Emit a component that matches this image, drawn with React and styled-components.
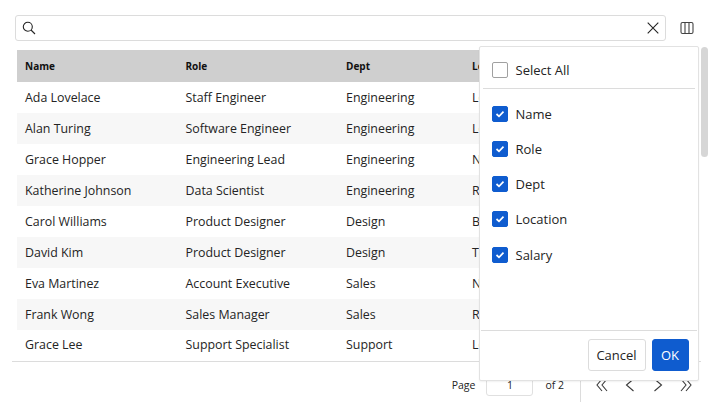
import styled, { createGlobalStyle } from 'styled-components';

const rows = [
  ['Ada Lovelace', 'Staff Engineer', 'Engineering', 'London'],
  ['Alan Turing', 'Software Engineer', 'Engineering', 'London'],
  ['Grace Hopper', 'Engineering Lead', 'Engineering', 'NYC'],
  ['Katherine Johnson', 'Data Scientist', 'Engineering', 'Remote'],
  ['Carol Williams', 'Product Designer', 'Design', 'Berlin'],
  ['David Kim', 'Product Designer', 'Design', 'Toronto'],
  ['Eva Martinez', 'Account Executive', 'Sales', 'NYC'],
  ['Frank Wong', 'Sales Manager', 'Sales', 'Remote'],
  ['Grace Lee', 'Support Specialist', 'Support', 'London'],
];

const columns = ['Name', 'Role', 'Dept', 'Location', 'Salary'];

const GlobalStyle = createGlobalStyle`
  html, body {
    margin: 0;
    padding: 0;
    background: #fff;
  }
  body {
    font-family: "Open Sans", "Noto Sans", sans-serif;
    color: #242424;
  }
`;

const Page = styled.div`
  position: relative;
  width: 720px;
  height: 415px;
  overflow: hidden;
  padding: 15px 12px 0 15px;
  box-sizing: border-box;
`;

const Toolbar = styled.div`
  display: flex;
  align-items: center;
  gap: 14px;
  height: 25.5px;
  width: 679px;
`;

const SearchBox = styled.div`
  flex: 1;
  height: 25.5px;
  box-sizing: border-box;
  display: flex;
  align-items: center;
  justify-content: space-between;
  padding: 0 5px 0 6px;
  border: 1px solid #dcdcdc;
  border-radius: 3px;
  color: #242424;
`;

const IconButton = styled.button`
  display: flex;
  align-items: center;
  justify-content: center;
  width: 14px;
  height: 14px;
  padding: 0;
  background: none;
  border: 0;
  color: ${(p) => p.$color || '#242424'};
`;

const TableWrap = styled.div`
  margin: 9.5px 0 0 -3px;
  width: 688.5px;
  border-bottom: 1px solid #dcdcdc;
  padding: 0 2px 1px 5px;
  box-sizing: border-box;
  overflow: hidden;
`;

const Row = styled.div`
  display: grid;
  grid-template-columns: 160.5px 160.5px 126px 120px 1fr;
  align-items: center;
  height: ${(p) => (p.$head ? '32.4px' : '30.9px')};
  background: ${(p) => (p.$head ? '#cfcfcf' : p.$alt ? '#f7f7f7' : '#fff')};
  font-size: ${(p) => (p.$head ? '10px' : '12.4px')};
  font-weight: ${(p) => (p.$head ? 700 : 400)};
  color: ${(p) => (p.$head ? '#111' : '#242424')};
`;

const Cell = styled.div`
  padding-left: 8px;
  white-space: nowrap;
`;

const Pager = styled.div`
  display: flex;
  justify-content: flex-end;
  align-items: flex-start;
  height: 40px;
  width: 679px;
  font-size: 10.5px;
  color: #242424;
`;

const PageInfo = styled.div`
  display: flex;
  align-items: center;
  height: 22px;
  margin-top: 12px;
`;

const PageInput = styled.div`
  width: 47px;
  height: 22px;
  box-sizing: border-box;
  margin: 0 12px 0 11px;
  border: 1px solid #e0e0e0;
  border-radius: 3px;
  display: flex;
  align-items: center;
  justify-content: center;
`;

const PagerNav = styled.div`
  display: flex;
  align-items: flex-start;
  gap: 12px;
  height: 40px;
  box-sizing: border-box;
  margin-left: 16px;
  padding: 15px 0 0 13px;
  border-left: 1px solid #dcdcdc;
  color: #3a3a3a;
`;

const Popup = styled.div`
  position: absolute;
  left: 478.5px;
  top: 46px;
  width: 220px;
  height: 334.5px;
  box-sizing: border-box;
  background: #fff;
  border: 1px solid #e2e2e2;
  border-radius: 2px;
  box-shadow: 0 1px 2px rgba(0, 0, 0, 0.06);
  display: flex;
  flex-direction: column;
  font-size: 13px;
  color: #242424;
`;

const SelectAll = styled.label`
  display: flex;
  align-items: center;
  gap: 8px;
  height: 41.5px;
  box-sizing: border-box;
  margin: 0 3px;
  padding: 6px 9px 0;
  border-bottom: 1px solid #dcdcdc;
`;

const ColumnList = styled.div`
  flex: 1;
  display: flex;
  flex-direction: column;
  gap: 19.2px;
  padding: 17.4px 12px 0;
`;

const ColumnItem = styled.label`
  display: flex;
  align-items: center;
  gap: 8px;
  height: 16px;
`;

const Box = styled.span`
  width: 16px;
  height: 16px;
  box-sizing: border-box;
  display: flex;
  align-items: center;
  justify-content: center;
  border-radius: 2px;
  border: ${(p) => (p.$checked ? '1px solid #0f5ccf' : '1.5px solid #a0a0a0')};
  background: ${(p) => (p.$checked ? '#0f5ccf' : '#fff')};
`;

const PopupFooter = styled.div`
  display: flex;
  justify-content: flex-end;
  gap: 6px;
  height: 50px;
  box-sizing: border-box;
  margin: 0 1px;
  padding: 8px 8px 0;
  border-top: 1px solid #dcdcdc;
`;

const Btn = styled.button`
  height: 32px;
  width: ${(p) => (p.$primary ? '37px' : '58px')};
  padding: 0;
  font: inherit;
  border-radius: 3px;
  border: 1px solid ${(p) => (p.$primary ? '#0f5ccf' : '#dcdcdc')};
  background: ${(p) => (p.$primary ? '#0f5ccf' : '#fff')};
  color: ${(p) => (p.$primary ? '#fff' : '#242424')};
`;

const ScrollThumb = styled.div`
  position: absolute;
  left: 701px;
  top: 47px;
  width: 7px;
  height: 110px;
  border-radius: 4px;
  background: #d6d6d6;
`;

const Checkbox = ({ checked }) => (
  <Box $checked={checked}>
    {checked && (
      <svg width="10" height="8" viewBox="0 0 10 8" fill="none">
        <path d="M1.5 4 L4 6.3 L8.5 1.7" stroke="#fff" strokeWidth="1.7" />
      </svg>
    )}
  </Box>
);

const Chevron = ({ d }) => (
  <svg width="16" height="16" viewBox="0 0 16 16" fill="none" stroke="currentColor" strokeWidth="1.1">
    <path d={d} />
  </svg>
);

export default function App() {
  return (
    <>
      <GlobalStyle />
      <Page>
        <Toolbar>
          <SearchBox>
            <svg width="14" height="14" viewBox="0 0 14 14" fill="none" stroke="currentColor" strokeWidth="1.1">
              <circle cx="5.8" cy="5.8" r="4.5" />
              <path d="M9 9 L13 13" />
            </svg>
            <IconButton>
              <svg width="12" height="12" viewBox="0 0 12 12" fill="none" stroke="currentColor" strokeWidth="1.1">
                <path d="M0.7 0.7 L11.3 11.3 M11.3 0.7 L0.7 11.3" />
              </svg>
            </IconButton>
          </SearchBox>
          <IconButton $color="#444">
            <svg width="14" height="14" viewBox="0 0 14 14" fill="none" stroke="currentColor" strokeWidth="1.1">
              <rect x="1" y="1.5" width="12" height="11" rx="1.5" />
              <path d="M5 1.5 V12.5 M9 1.5 V12.5" />
            </svg>
          </IconButton>
        </Toolbar>
        <TableWrap>
          <Row $head>
            {columns.map((c) => (
              <Cell key={c}>{c}</Cell>
            ))}
          </Row>
          {rows.map((r, i) => (
            <Row key={r[0]} $alt={i % 2 === 1}>
              {r.map((v, j) => (
                <Cell key={j}>{v}</Cell>
              ))}
            </Row>
          ))}
        </TableWrap>
        <Pager>
          <PageInfo>
            Page
            <PageInput>1</PageInput>
            of 2
          </PageInfo>
          <PagerNav>
            <Chevron d="M8 2 L3 8 L8 14 M13 2 L8 8 L13 14" />
            <Chevron d="M11.5 2 L4.5 8 L11.5 14" />
            <Chevron d="M4.5 2 L11.5 8 L4.5 14" />
            <Chevron d="M3 2 L8 8 L3 14 M8 2 L13 8 L8 14" />
          </PagerNav>
        </Pager>
        <ScrollThumb />
        <Popup>
          <SelectAll>
            <Checkbox />
            Select All
          </SelectAll>
          <ColumnList>
            {columns.map((c) => (
              <ColumnItem key={c}>
                <Checkbox checked />
                {c}
              </ColumnItem>
            ))}
          </ColumnList>
          <PopupFooter>
            <Btn>Cancel</Btn>
            <Btn $primary>OK</Btn>
          </PopupFooter>
        </Popup>
      </Page>
    </>
  );
}
